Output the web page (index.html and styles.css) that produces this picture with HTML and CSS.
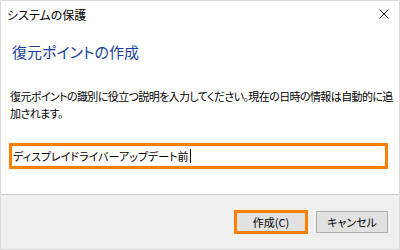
FILE: index.html
```html
<!DOCTYPE html>
<html>
<head>
  <title>システムの保護</title>
  <link rel="stylesheet" href="styles.css">
</head>
<body>
  <div class="window">
    <div class="titlebar">
      <span class="title">システムの保護</span>
      <svg class="close" width="10" height="10" viewBox="0 0 10 10">
        <path d="M0.5 0.5 L9.5 9.5 M9.5 0.5 L0.5 9.5" stroke="#222" stroke-width="1" fill="none"/>
      </svg>
    </div>
    <div class="content">
      <div class="heading">復元ポイントの作成</div>
      <p class="desc">復元ポイントの識別に役立つ説明を入力してください。現在の日時の情報は自動的に追<br>加されます。</p>
      <div class="textbox">ディスプレイドライバーアップデート前<span class="caret"></span></div>
    </div>
    <div class="footer">
      <button class="btn primary">作成(C)</button>
      <button class="btn">キャンセル</button>
    </div>
  </div>
</body>
</html>
```

FILE: styles.css
```css
body {
  margin: 0;
  font-family: "Noto Sans CJK JP", "Noto Sans", sans-serif;
  font-feature-settings: "palt";
  background: #fff;
}

.window {
  width: 400px;
  height: 250px;
  box-sizing: border-box;
  border: 1px solid #dadada;
  display: flex;
  flex-direction: column;
  background: #fff;
}

.titlebar {
  height: 26px;
  display: flex;
  align-items: center;
  justify-content: space-between;
  padding: 0 10px 0 6px;
  font-size: 12px;
  color: #000;
}

.close {
  display: block;
}

.content {
  flex: 1;
  padding: 0 3px 0 8px;
}

.heading {
  margin-top: 15px;
  font-size: 15px;
  line-height: 20px;
  color: #1a3f9e;
  padding-left: 3px;
}

.desc {
  margin: 26px 0 0 1px;
  font-size: 11px;
  line-height: 17px;
  letter-spacing: -0.6px;
  white-space: nowrap;
  color: #000;
}

.textbox {
  margin-top: 21px;
  width: 379px;
  height: 26px;
  box-sizing: border-box;
  border: 3px solid #ff8000;
  padding-left: 1px;
  font-size: 11px;
  display: flex;
  align-items: center;
  color: #000;
}

.caret {
  display: inline-block;
  width: 0;
  height: 14px;
  border-left: 1px solid #000;
  margin-left: 1px;
}

.footer {
  height: 55px;
  box-sizing: border-box;
  border-top: 1px solid #c9c9c9;
  background: #f0f0f0;
  display: flex;
  align-items: center;
  justify-content: flex-end;
  gap: 9px;
  padding-right: 11px;
}

.btn {
  width: 72px;
  height: 22px;
  font-family: inherit;
  font-feature-settings: "palt";
  font-size: 11px;
  color: #000;
  background: #e1e1e1;
  border: 1px solid #adadad;
  padding: 0;
}

.btn.primary {
  outline: 3px solid #ff8000;
  outline-offset: -2px;
}
```
